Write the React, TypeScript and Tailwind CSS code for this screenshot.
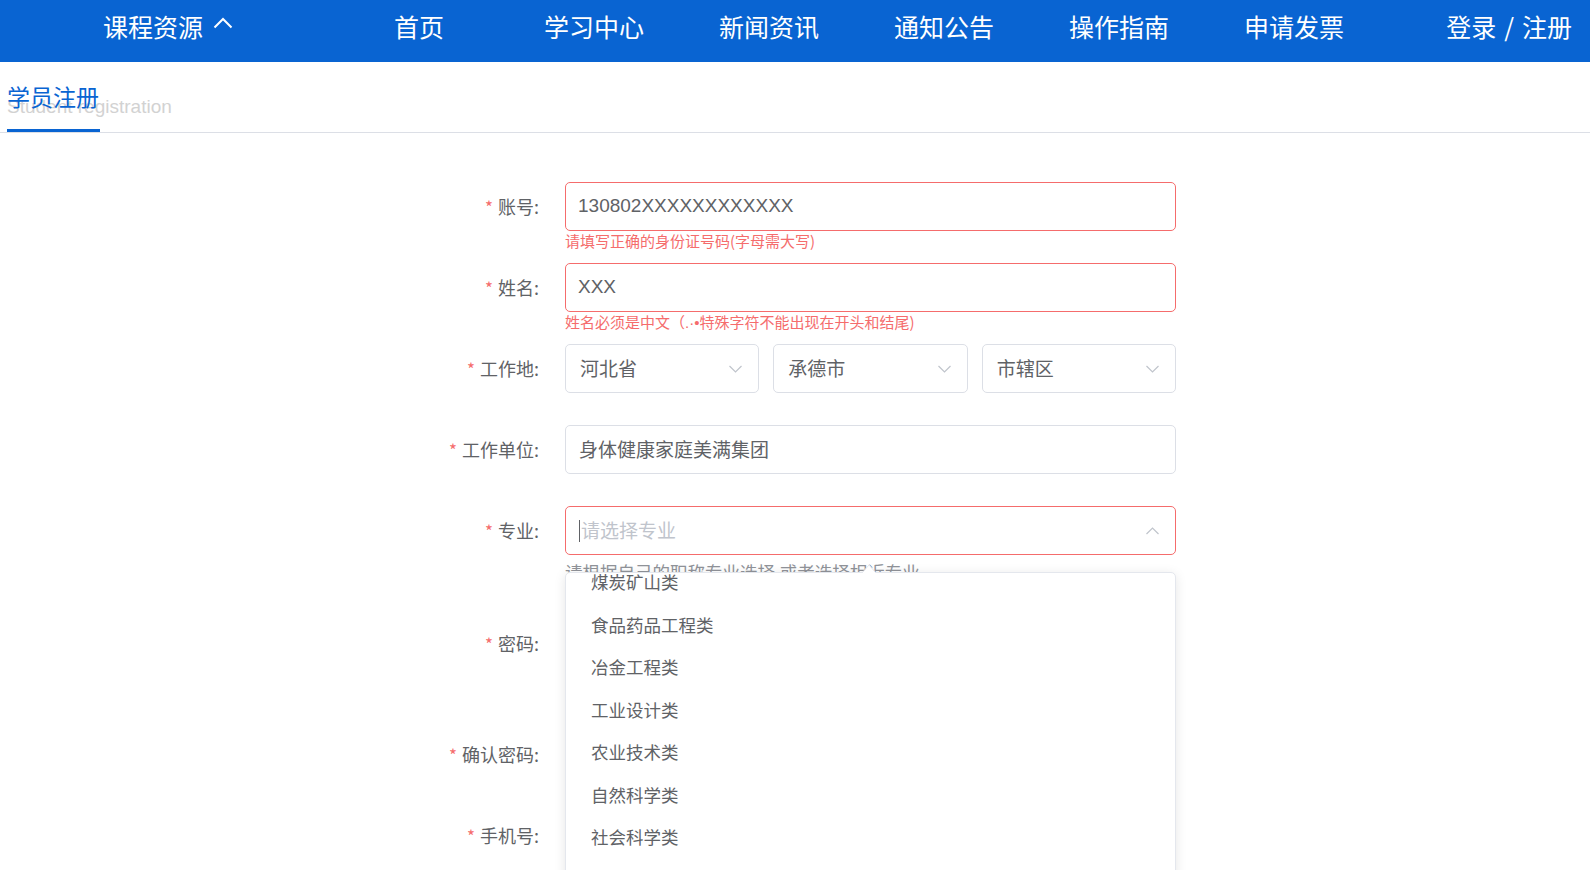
import React from "react";

const CJK = { fontFamily: '"Noto Sans CJK SC", "Noto Sans", sans-serif' };
const LAT = { fontFamily: '"Liberation Sans", Arial, sans-serif' };

function ChevronDown() {
  return (
    <svg width="13" height="8" viewBox="0 0 13 8" className="absolute right-[16px] top-1/2 -translate-y-1/2">
      <path d="M0.5 1 L6.5 7 L12.5 1" fill="none" stroke="#c0c4cc" strokeWidth="1.2" />
    </svg>
  );
}

function ChevronUp() {
  return (
    <svg width="13" height="8" viewBox="0 0 13 8" className="absolute right-[16px] top-1/2 -translate-y-1/2">
      <path d="M0.5 7 L6.5 1 L12.5 7" fill="none" stroke="#c0c4cc" strokeWidth="1.2" />
    </svg>
  );
}

function Label({ text }: { text: string }) {
  return (
    <div className="w-[160px] h-[49px] shrink-0 flex items-center justify-end pr-[26px] text-[18px] text-[#606266]">
      <span className="text-[#f56c6c] mr-[5px] text-[17px] leading-none">*</span>
      <span>{text}:</span>
    </div>
  );
}

function Row({
  label,
  children,
  after,
  afterH,
}: {
  label: string;
  children: React.ReactNode;
  after?: React.ReactNode;
  afterH: string;
}) {
  return (
    <div className="flex">
      <Label text={label} />
      <div className="w-[611px]">
        {children}
        <div className={afterH}>{after}</div>
      </div>
    </div>
  );
}

const NAV = ["首页", "学习中心", "新闻资讯", "通知公告", "操作指南", "申请发票"];
const MAJORS = ["煤炭矿山类", "食品药品工程类", "冶金工程类", "工业设计类", "农业技术类", "自然科学类", "社会科学类", "其他类"];

export default function App() {
  return (
    <div className="w-[1590px] h-[870px] overflow-hidden bg-white relative" style={CJK}>
      {/* nav */}
      <nav className="h-[62px] bg-[#0964d2] flex items-center pb-[10px] text-white text-[25px] leading-none">
        <div className="w-[331.5px] shrink-0 pl-[103px] flex items-center">
          <span>课程资源</span>
          <svg width="20" height="12" viewBox="0 0 20 12" className="ml-[10px] -mt-[6px]">
            <path d="M1.5 10.5 L10 2 L18.5 10.5" fill="none" stroke="white" strokeWidth="2" />
          </svg>
        </div>
        {NAV.map((n) => (
          <div key={n} className="w-[175px] shrink-0 text-center">
            {n}
          </div>
        ))}
        <div className="ml-auto pr-[18px] whitespace-pre flex items-center">
          <span>登录</span>
          <span className="mx-[8px]">/</span>
          <span>注册</span>
        </div>
      </nav>

      {/* tab */}
      <div className="h-[71px] pl-[7px] border-b border-[#dcdfe6] flex items-end">
        <div className="relative w-[93px] h-[45px] border-b-[3px] border-[#0964d2]">
          <div className="absolute left-0 top-[10px] text-[19px] leading-none text-[#d2d2d2] whitespace-nowrap" style={LAT}>
            Student registration
          </div>
          <div className="absolute left-0 -top-[2px] text-[23px] leading-none text-[#0964d2] whitespace-nowrap">学员注册</div>
        </div>
      </div>

      {/* form */}
      <div className="ml-[405px] mt-[49px] flex flex-col">
        <Row
          label="账号"
          afterH="h-[32px]"
          after={<div className="text-[15px] leading-[19px] text-[#f56c6c]">请填写正确的身份证号码(字母需大写)</div>}
        >
          <div className="h-[49px] border border-[#f56c6c] rounded-[5px] flex items-center pl-[12px] text-[19px] text-[#606266]">
            <span style={LAT}>130802XXXXXXXXXXXX</span>
          </div>
        </Row>
        <Row
          label="姓名"
          afterH="h-[32px]"
          after={
            <div className="text-[15px] leading-[19px] text-[#f56c6c] whitespace-nowrap">
              姓名必须是中文（<span style={LAT}>.·•</span>特殊字符不能出现在开头和结尾)
            </div>
          }
        >
          <div className="h-[49px] border border-[#f56c6c] rounded-[5px] flex items-center pl-[12px] text-[19px] text-[#606266]">
            <span style={LAT}>XXX</span>
          </div>
        </Row>
        <Row label="工作地" afterH="h-[32px]">
          <div className="grid grid-cols-3 gap-[14px]">
            {["河北省", "承德市", "市辖区"].map((s) => (
              <div
                key={s}
                className="relative h-[49px] border border-[#dcdfe6] rounded-[5px] flex items-center pl-[14px] text-[19px] text-[#606266]"
              >
                {s}
                <ChevronDown />
              </div>
            ))}
          </div>
        </Row>
        <Row label="工作单位" afterH="h-[32px]">
          <div className="h-[49px] border border-[#dcdfe6] rounded-[5px] flex items-center pl-[13px] text-[19px] text-[#606266]">
            身体健康家庭美满集团
          </div>
        </Row>
        <Row
          label="专业"
          afterH="h-[59.5px]"
          after={
            <div className="mt-[4px] text-[17.5px] leading-[25px] text-[#909399] whitespace-nowrap">
              请根据自己的职称专业选择,或者选择相近专业
            </div>
          }
        >
          <div className="relative h-[49px] border border-[#f56c6c] rounded-[5px] flex items-center pl-[13px] text-[19px] text-[#c0c4cc]">
            <span className="w-px h-[22px] bg-[#606266] mr-[1px]" />
            请选择专业
            <ChevronUp />
          </div>
        </Row>
        <Row label="密码" afterH="h-[62px]">
          <div className="h-[49px] border border-[#dcdfe6] rounded-[5px]" />
        </Row>
        <Row label="确认密码" afterH="h-[32px]">
          <div className="h-[49px] border border-[#dcdfe6] rounded-[5px]" />
        </Row>
        <Row label="手机号" afterH="h-[32px]">
          <div className="h-[49px] border border-[#dcdfe6] rounded-[5px]" />
        </Row>
      </div>

      {/* dropdown */}
      <div className="absolute left-[565px] top-[572px] w-[611px] h-[330px] bg-white border border-[#e4e7ed] rounded-[5px] shadow-[0_2px_12px_rgba(0,0,0,0.1)]">
        <svg width="14" height="9" viewBox="0 0 14 9" className="absolute left-[296px] -top-[9px]">
          <path d="M0 9 L7 1 L14 9 Z" fill="white" />
          <path d="M0 9 L7 1 L14 9" fill="none" stroke="#e4e7ed" strokeWidth="1" />
        </svg>
        <div className="overflow-hidden h-full rounded-[5px]">
          <div className="-mt-[12px]">
            {MAJORS.map((m) => (
              <div key={m} className="h-[42.5px] flex items-center pl-[25px] text-[17.5px] text-[#606266]">
                {m}
              </div>
            ))}
          </div>
        </div>
      </div>
    </div>
  );
}
